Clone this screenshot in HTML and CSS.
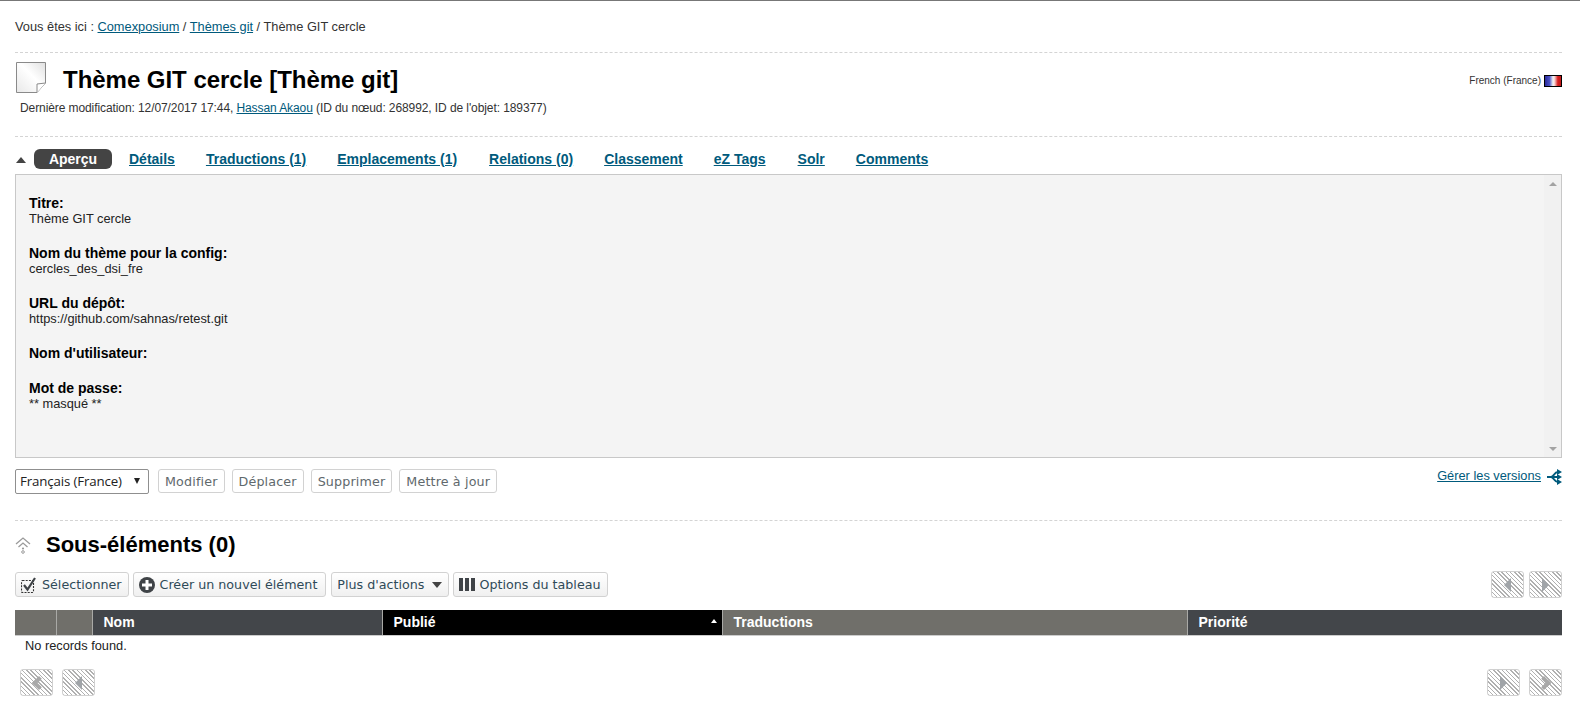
FILE: index.html
```html
<!DOCTYPE html>
<html lang="fr">
<head>
  <meta charset="UTF-8">
  <title>Thème GIT cercle</title>
  <link rel="stylesheet" href="styles.css">
</head>
<body>
  <div class="page">
    <div class="breadcrumb">
      Vous êtes ici : <a href="#">Comexposium</a> / <a href="#">Thèmes git</a> / Thème GIT cercle
    </div>

    <header class="object-header">
      <div class="object-title">
        <svg class="doc-icon" width="30" height="31" viewBox="0 0 30 31">
          <defs>
            <linearGradient id="docfill" x1="1" y1="0" x2="0" y2="1">
              <stop offset="0" stop-color="#e0e0e0"/>
              <stop offset="0.45" stop-color="#ffffff"/>
              <stop offset="1" stop-color="#e8e8e8"/>
            </linearGradient>
          </defs>
          <path d="M.5 .5H29.5V21L21 30.5H.5Z" fill="url(#docfill)" stroke="#8a8a8a"/>
          <path d="M29.5 21L21 22V30.5" fill="#fff" stroke="#8a8a8a"/>
        </svg>
        <h1>Thème GIT cercle [Thème git]</h1>
        <div class="language">French (France) <span class="flag"></span></div>
      </div>
      <p class="object-meta">Dernière modification: 12/07/2017 17:44, <a href="#">Hassan Akaou</a> (ID du nœud: 268992, ID de l'objet: 189377)</p>
    </header>

    <section class="view">
      <nav class="tabs">
        <span class="tabs-caret"></span>
        <a class="tab active" href="#">Aperçu</a>
        <a class="tab tab-first" href="#">Détails</a>
        <a class="tab" href="#">Traductions (1)</a>
        <a class="tab" href="#">Emplacements (1)</a>
        <a class="tab tab-wide" href="#">Relations (0)</a>
        <a class="tab" href="#">Classement</a>
        <a class="tab" href="#">eZ Tags</a>
        <a class="tab tab-wide" href="#">Solr</a>
        <a class="tab" href="#">Comments</a>
      </nav>

      <div class="view-box">
        <div class="attributes">
          <div class="attr"><strong>Titre:</strong><span>Thème GIT cercle</span></div>
          <div class="attr"><strong>Nom du thème pour la config:</strong><span>cercles_des_dsi_fre</span></div>
          <div class="attr"><strong>URL du dépôt:</strong><span>https://github.com/sahnas/retest.git</span></div>
          <div class="attr attr-empty"><strong>Nom d'utilisateur:</strong></div>
          <div class="attr"><strong>Mot de passe:</strong><span>** masqué **</span></div>
        </div>
        <div class="scrollbar">
          <span class="scroll-up"></span>
          <span class="scroll-down"></span>
        </div>
      </div>

      <div class="object-actions">
        <div class="fake-select">Français (France)<span class="select-arrow"></span></div>
        <button class="btn">Modifier</button>
        <button class="btn">Déplacer</button>
        <button class="btn">Supprimer</button>
        <button class="btn">Mettre à jour</button>
        <div class="versions">
          <a href="#">Gérer les versions</a>
          <svg width="15" height="16" viewBox="0 0 15 16">
            <path d="M0 8H12M4 8C7 8 7 3 11 3M4 8C7 8 7 13 11 13" fill="none" stroke="#005a7c" stroke-width="2"/>
            <path d="M10 0L15 3L10 6ZM10 5L15 8L10 11ZM10 10L15 13L10 16Z" fill="#005a7c"/>
          </svg>
        </div>
      </div>
    </section>

    <section class="children">
      <div class="children-title">
        <svg width="16" height="17" viewBox="0 0 16 17">
          <path d="M1 7L8 1L15 7M3.5 10L8 6L12.5 10" fill="none" stroke="#9a9a9a" stroke-width="1.3"/>
          <circle cx="8" cy="11.5" r="1.1" fill="#9a9a9a"/>
          <circle cx="8" cy="15" r="1.3" fill="none" stroke="#9a9a9a"/>
        </svg>
        <h2>Sous-éléments (0)</h2>
      </div>

      <div class="toolbar">
        <button class="btn btn-tool btn-select">
          <svg width="16" height="16" viewBox="0 0 16 16">
            <rect x=".5" y="3.5" width="12" height="12" rx="1" fill="none" stroke="#333" stroke-width="1.1" stroke-dasharray="2 1.2"/>
            <path d="M3 8L6.5 12.5L14 1" fill="none" stroke="#3f4347" stroke-width="2.2"/>
          </svg>
          Sélectionner
        </button>
        <button class="btn btn-tool btn-create">
          <svg width="16" height="16" viewBox="0 0 16 16">
            <circle cx="8" cy="8" r="8" fill="#3f4347"/>
            <path d="M8 3V13M3 8H13" stroke="#fff" stroke-width="3"/>
          </svg>
          Créer un nouvel élément
        </button>
        <button class="btn btn-tool btn-more">Plus d'actions <span class="btn-caret"></span></button>
        <button class="btn btn-tool btn-columns">
          <svg width="16" height="15" viewBox="0 0 16 15">
            <path d="M0 1H4V14H0ZM6 1H10V14H6ZM12 1H16V14H12Z" fill="#3f4347"/>
          </svg>
          Options du tableau
        </button>
        <div class="pager pager-top">
          <span class="page-btn"><i class="tri tri-left"></i></span>
          <span class="page-btn"><i class="tri tri-right"></i></span>
        </div>
      </div>

      <table class="grid">
        <colgroup>
          <col class="col-a"><col class="col-b"><col class="col-name"><col class="col-pub"><col class="col-trans"><col>
        </colgroup>
        <thead>
          <tr>
            <th class="th-muted"></th>
            <th class="th-muted"></th>
            <th>Nom</th>
            <th class="th-sorted">Publié<span class="sort-caret"></span></th>
            <th class="th-muted">Traductions</th>
            <th>Priorité</th>
          </tr>
        </thead>
        <tbody>
          <tr><td colspan="6">No records found.</td></tr>
        </tbody>
      </table>

      <div class="pager-row">
        <div class="pager pager-wide">
          <span class="page-btn"><i class="chev chev-left"></i></span>
          <span class="page-btn"><i class="tri tri-left"></i></span>
        </div>
        <div class="pager pager-wide">
          <span class="page-btn"><i class="tri tri-right"></i></span>
          <span class="page-btn"><i class="chev chev-right"></i></span>
        </div>
      </div>
    </section>
  </div>
</body>
</html>
```

FILE: styles.css
```css
* { margin: 0; padding: 0; box-sizing: border-box; }

html, body { background: #fff; }

body {
  font-family: "Liberation Sans", Arial, sans-serif;
  font-size: 12.8px;
  color: #333;
  border-top: 1px solid #777;
}

a { color: #005a7c; }

.page {
  padding: 0 18px 0 15px;
}

.breadcrumb {
  height: 52px;
  padding-top: 18px;
  line-height: 16px;
  border-bottom: 1px dashed #d4d4d4;
}

.object-header {
  height: 84px;
  padding-top: 9px;
  border-bottom: 1px dashed #d4d4d4;
}

.object-title {
  display: flex;
  align-items: flex-start;
  height: 33px;
  padding-left: 1px;
}

.object-title h1 {
  font-size: 24px;
  letter-spacing: -0.03px;
  color: #000;
  margin-left: 17px;
  line-height: 35px;
}

.language {
  margin-left: auto;
  margin-top: 13px;
  height: 12px;
  line-height: 12px;
  font-size: 10px;
  display: flex;
  align-items: center;
  gap: 3px;
}

.flag {
  display: inline-block;
  width: 18px;
  height: 12px;
  border: 1px solid #000;
  background: linear-gradient(to right, #2a2a9c 0%, #4a52c4 28%, #f4f4f4 50%, #f8d0d0 60%, #d82020 80%, #c01818 100%);
}

.object-meta {
  font-size: 12px;
  line-height: 14px;
  padding: 6px 0 0 5px;
  letter-spacing: -0.09px;
}

.tabs {
  display: flex;
  align-items: center;
  height: 21px;
  margin-top: 11px;
}

.tabs-caret {
  width: 0;
  height: 0;
  border-left: 5px solid transparent;
  border-right: 5px solid transparent;
  border-bottom: 6px solid #444;
  margin: 2px 8px 0 1px;
}

.tab {
  font-size: 14px;
  font-weight: bold;
  line-height: 20px;
  margin-left: 31px;
}

.tab.active {
  background: #444;
  color: #fff;
  text-decoration: none;
  width: 78px;
  text-align: center;
  border-radius: 6px;
  margin-left: 0;
}

.tab.tab-first { margin-left: 17px; }
.tab.tab-wide { margin-left: 32px; }

.view-box {
  display: flex;
  height: 284px;
  margin-top: 5px;
  background: #f4f4f4;
  border: 1px solid #c8c8c8;
}

.attributes {
  flex: 1;
  padding: 20px 13px 0;
}

.attr {
  height: 50px;
  line-height: 15px;
}

.attr-empty { height: 35px; }

.attr strong {
  display: block;
  font-size: 14px;
  color: #000;
  line-height: 16px;
}

.attr span {
  display: block;
  color: #222;
}

.scrollbar {
  width: 17px;
  background: #f1f1f1;
  display: flex;
  flex-direction: column;
  justify-content: space-between;
  align-items: center;
  padding: 7px 0 6px;
}

.scroll-up,
.scroll-down {
  width: 0;
  height: 0;
  border-left: 4px solid transparent;
  border-right: 4px solid transparent;
}

.scroll-up { border-bottom: 4px solid #a3a3a3; }
.scroll-down { border-top: 4px solid #a3a3a3; }

.object-actions {
  display: flex;
  align-items: flex-start;
  gap: 7px;
  margin-top: 11px;
  height: 52px;
  border-bottom: 1px dashed #d4d4d4;
}

.object-actions .btn { letter-spacing: 0.15px; }

.fake-select {
  position: relative;
  width: 134px;
  height: 25px;
  margin-right: 2px;
  line-height: 23px;
  padding-left: 4px;
  border: 1px solid #8f8f8f;
  border-radius: 2px;
  font-size: 13.3px;
  font-family: "Open Sans", "Liberation Sans", sans-serif;
  letter-spacing: -0.15px;
  color: #222;
}

.select-arrow {
  position: absolute;
  right: 8px;
  top: 8px;
  width: 0;
  height: 0;
  border-left: 3.5px solid transparent;
  border-right: 3.5px solid transparent;
  border-top: 6px solid #222;
}

.btn {
  height: 24px;
  padding: 0 6px;
  background: #fff;
  border: 1px solid #d2d2d2;
  border-radius: 3px;
  font-family: "DejaVu Sans", Verdana, sans-serif;
  font-size: 12.7px;
  color: #60686c;
  white-space: nowrap;
}

.versions {
  margin-left: auto;
  display: flex;
  align-items: flex-start;
  gap: 6px;
}

.versions a { line-height: 14px; }

.children-title {
  display: flex;
  align-items: center;
  height: 32px;
  margin-top: 8px;
}

.children-title h2 {
  font-size: 22px;
  color: #000;
  margin-left: 15px;
  line-height: 32px;
}

.toolbar {
  display: flex;
  align-items: center;
  gap: 4px;
  margin-top: 10px;
}

.btn-tool {
  display: flex;
  align-items: center;
  gap: 5px;
  height: 25px;
  padding: 0 7px 0 5px;
  color: #2f4a58;
  background: linear-gradient(#fff, #f0f0f0);
}

.btn-select { padding-right: 6px; }
.btn-create { padding-right: 8px; }
.btn-more { margin-left: 1px; padding-right: 6px; }
.btn-columns { padding-right: 6px; gap: 4px; }

.btn-caret {
  width: 0;
  height: 0;
  margin-left: 3px;
  border-left: 5px solid transparent;
  border-right: 5px solid transparent;
  border-top: 6px solid #444;
}

.pager {
  display: flex;
  gap: 5px;
}

.pager-top { margin-left: auto; }
.pager-wide { gap: 9px; }

.page-btn {
  display: flex;
  align-items: center;
  justify-content: center;
  width: 33px;
  height: 27px;
  border: 1px solid #d0d0d0;
  border-radius: 3px;
  background: repeating-linear-gradient(45deg, #b0b0b0 0, #b0b0b0 1px, #fff 1px, #fff 3px);
}

.tri {
  width: 0;
  height: 0;
  border-top: 7px solid transparent;
  border-bottom: 7px solid transparent;
}

.tri-left { border-right: 7px solid #a0a4a8; }
.tri-right { border-left: 7px solid #a0a4a8; }

.chev {
  width: 10px;
  height: 10px;
  border-left: 4px solid #a8a8a8;
  border-bottom: 4px solid #a8a8a8;
}

.chev-left { transform: rotate(45deg); margin-left: 4px; }
.chev-right { transform: rotate(225deg); margin-right: 4px; }

.grid {
  width: 100%;
  margin-top: 12px;
  table-layout: fixed;
  border-collapse: collapse;
}

.col-a { width: 41px; }
.col-b { width: 36px; }
.col-name { width: 290px; }
.col-pub { width: 340px; }
.col-trans { width: 465px; }

.grid th {
  position: relative;
  height: 25px;
  padding: 0 11px;
  text-align: left;
  font-size: 14px;
  color: #fff;
  background: #43464a;
  border-left: 1px solid #a9a9a6;
  border-bottom: 1px solid #ccc;
}

.grid th:first-child { border-left: 0; }
.grid th.th-muted { background: #706f6a; }
.grid th.th-sorted { background: #000; }

.sort-caret {
  position: absolute;
  right: 5px;
  top: 9px;
  width: 0;
  height: 0;
  border-left: 3.5px solid transparent;
  border-right: 3.5px solid transparent;
  border-bottom: 4px solid #fff;
}

.grid td {
  height: 21px;
  padding-left: 10px;
  color: #222;
}

.pager-row {
  display: flex;
  justify-content: space-between;
  margin-top: 13px;
  padding-left: 5px;
}
```
